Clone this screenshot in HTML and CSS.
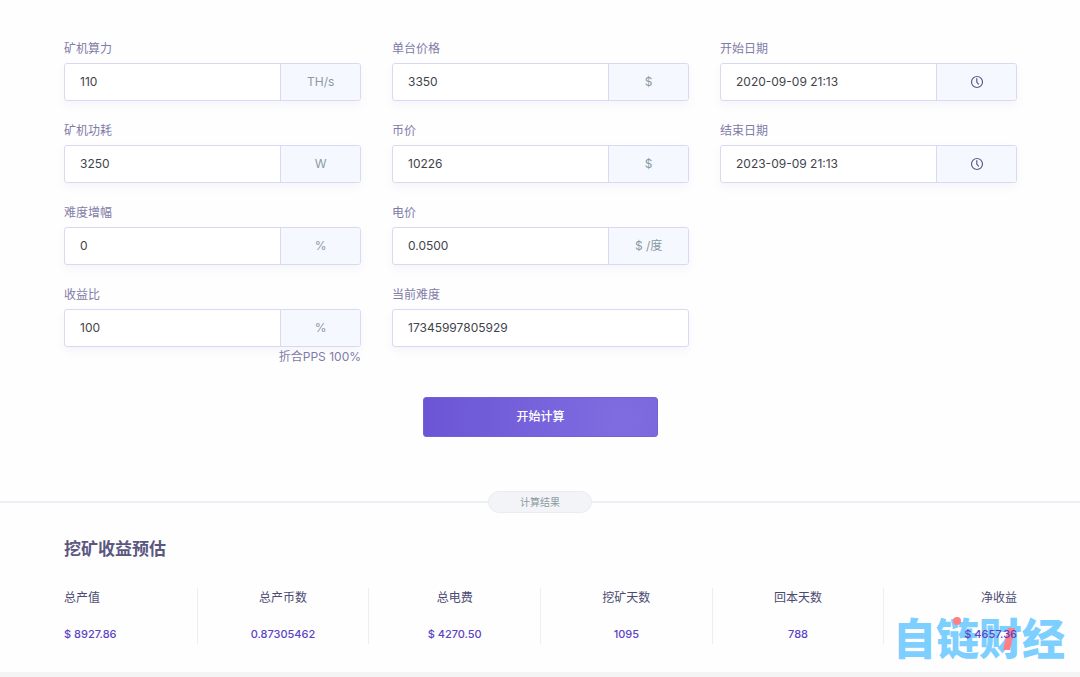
FILE: index.html
```html
<!DOCTYPE html>
<html lang="zh-CN">
<head>
<meta charset="utf-8">
<title>挖矿收益预估</title>
<link rel="stylesheet" href="styles.css">
</head>
<body>
<main class="card">
  <form class="form">
    <div class="columns">
      <div class="column">
        <div class="field">
          <label for="hashrate">矿机算力</label>
          <div class="group"><input id="hashrate" type="text" value="110"><span class="addon">TH/s</span></div>
        </div>
        <div class="field">
          <label for="power">矿机功耗</label>
          <div class="group"><input id="power" type="text" value="3250"><span class="addon">W</span></div>
        </div>
        <div class="field">
          <label for="growth">难度增幅</label>
          <div class="group"><input id="growth" type="text" value="0"><span class="addon">%</span></div>
        </div>
        <div class="field">
          <label for="ratio">收益比</label>
          <div class="group"><input id="ratio" type="text" value="100"><span class="addon">%</span></div>
          <p class="hint">折合PPS 100%</p>
        </div>
      </div>
      <div class="column">
        <div class="field">
          <label for="price">单台价格</label>
          <div class="group"><input id="price" type="text" value="3350"><span class="addon">$</span></div>
        </div>
        <div class="field">
          <label for="coin">币价</label>
          <div class="group"><input id="coin" type="text" value="10226"><span class="addon">$</span></div>
        </div>
        <div class="field">
          <label for="electricity">电价</label>
          <div class="group"><input id="electricity" type="text" value="0.0500"><span class="addon">$ /度</span></div>
        </div>
        <div class="field">
          <label for="difficulty">当前难度</label>
          <div class="group"><input id="difficulty" type="text" value="17345997805929"></div>
        </div>
      </div>
      <div class="column">
        <div class="field">
          <label for="start">开始日期</label>
          <div class="group"><input id="start" type="text" value="2020-09-09 21:13"><button class="addon" type="button" aria-label="选择开始日期"><svg class="clock" viewBox="0 0 14 14"><circle cx="7" cy="7" r="5.5"/><path d="M6.8 3.6V7.2L8.5 9.1"/></svg></button></div>
        </div>
        <div class="field">
          <label for="end">结束日期</label>
          <div class="group"><input id="end" type="text" value="2023-09-09 21:13"><button class="addon" type="button" aria-label="选择结束日期"><svg class="clock" viewBox="0 0 14 14"><circle cx="7" cy="7" r="5.5"/><path d="M6.8 3.6V7.2L8.5 9.1"/></svg></button></div>
        </div>
      </div>
    </div>
    <button class="submit" type="button">开始计算</button>
  </form>

  <div class="divider"><span class="pill">计算结果</span></div>

  <section class="results">
    <h1>挖矿收益预估</h1>
    <dl class="stats">
      <div class="stat"><dt>总产值</dt><dd>$ 8927.86</dd></div>
      <div class="stat"><dt>总产币数</dt><dd>0.87305462</dd></div>
      <div class="stat"><dt>总电费</dt><dd>$ 4270.50</dd></div>
      <div class="stat"><dt>挖矿天数</dt><dd>1095</dd></div>
      <div class="stat"><dt>回本天数</dt><dd>788</dd></div>
      <div class="stat"><dt>净收益</dt><dd>$ 4657.36</dd></div>
    </dl>
  </section>
  <div class="watermark">自链财经<svg class="accents" viewBox="0 0 176 44"><circle cx="64" cy="7" r="4"/><path d="M115 14H122L117 36H110Z"/></svg></div>
</main>
</body>
</html>
```
FILE: styles.css
```css
* {
  box-sizing: border-box;
}

body {
  margin: 0;
  background: #f4f4f4;
  color: #4c4a73;
  font: 12px/20px Inter, "Noto Sans CJK SC", sans-serif;
}

h1, p, dl, dd {
  margin: 0;
}

.card {
  position: relative;
  padding: 39px 0 28px;
  background: #fefefe;
}

.form {
  display: flex;
  flex-direction: column;
  align-items: center;
  padding: 0 63px 0 64px;
}

.columns {
  display: grid;
  grid-template-columns: repeat(3, 1fr);
  gap: 31px;
  width: 100%;
}

.column {
  display: flex;
  flex-direction: column;
  gap: 20px;
}

.field label {
  display: block;
  color: #7f7ca8;
}

.group {
  display: flex;
  height: 38px;
  margin-top: 4px;
  overflow: hidden;
  border: 1px solid #d9d9f4;
  border-radius: 3px;
  background: #fff;
  box-shadow: 0 4px 10px rgba(110, 110, 190, 0.06);
}

.group input {
  flex: 1;
  min-width: 0;
  padding: 0 15px;
  border: 0;
  outline: 0;
  background: transparent;
  color: #3f444b;
  font: inherit;
}

.addon {
  display: flex;
  flex: 0 0 27%;
  align-items: center;
  justify-content: center;
  padding: 0;
  border: 0;
  border-left: 1px solid #d9d9f4;
  background: #f5f9ff;
  color: #8b9a9f;
  font: inherit;
}

.clock {
  width: 14px;
  height: 14px;
  fill: none;
  stroke: #5c5a85;
  stroke-width: 1.2;
  stroke-linecap: round;
  stroke-linejoin: round;
}

.hint {
  color: #7f7ca8;
  text-align: right;
}

.submit {
  width: 235px;
  height: 40px;
  margin-top: 30px;
  padding: 0;
  border: 1px solid #7661dc;
  border-radius: 3px;
  background: radial-gradient(circle at 85% 60%, #806de0, #6b55d5);
  color: #fff;
  font: inherit;
  font-weight: 500;
}

.divider {
  display: flex;
  align-items: center;
  margin-top: 54px;
}

.divider::before,
.divider::after {
  flex: 1;
  height: 2px;
  background: #efeff5;
  content: "";
}

.pill {
  width: 104px;
  border: 1px solid #ebecf2;
  border-radius: 11px;
  background: #f2f4f8;
  color: #8b9a9f;
  font-size: 10px;
  text-align: center;
}

.results {
  padding: 23px 25px 0;
}

h1 {
  padding-left: 39px;
  color: #5a587f;
  font-size: 17px;
  font-weight: 700;
  line-height: 26px;
}

.stats {
  display: grid;
  grid-template-columns: repeat(6, 1fr);
  margin-top: 26px;
}

.stat {
  display: flex;
  flex-direction: column;
  gap: 16px;
  text-align: center;
}

.stat + .stat {
  border-left: 1px solid #ededf5;
}

.stat:first-child {
  padding-left: 39px;
  text-align: left;
}

.stat:last-child {
  padding-right: 38px;
  text-align: right;
}

.stat dd {
  position: relative;
  z-index: 1;
  color: #5a43c6;
  font-size: 11px;
  font-weight: 500;
}

.watermark {
  position: absolute;
  right: 11px;
  bottom: 14px;
  width: 176px;
  color: #7dcfff;
  font: 900 43px/44px "Noto Sans CJK SC", sans-serif;
  white-space: nowrap;
}

.accents {
  position: absolute;
  inset: 0;
  width: 176px;
  height: 44px;
  fill: #ff7f86;
}
```
